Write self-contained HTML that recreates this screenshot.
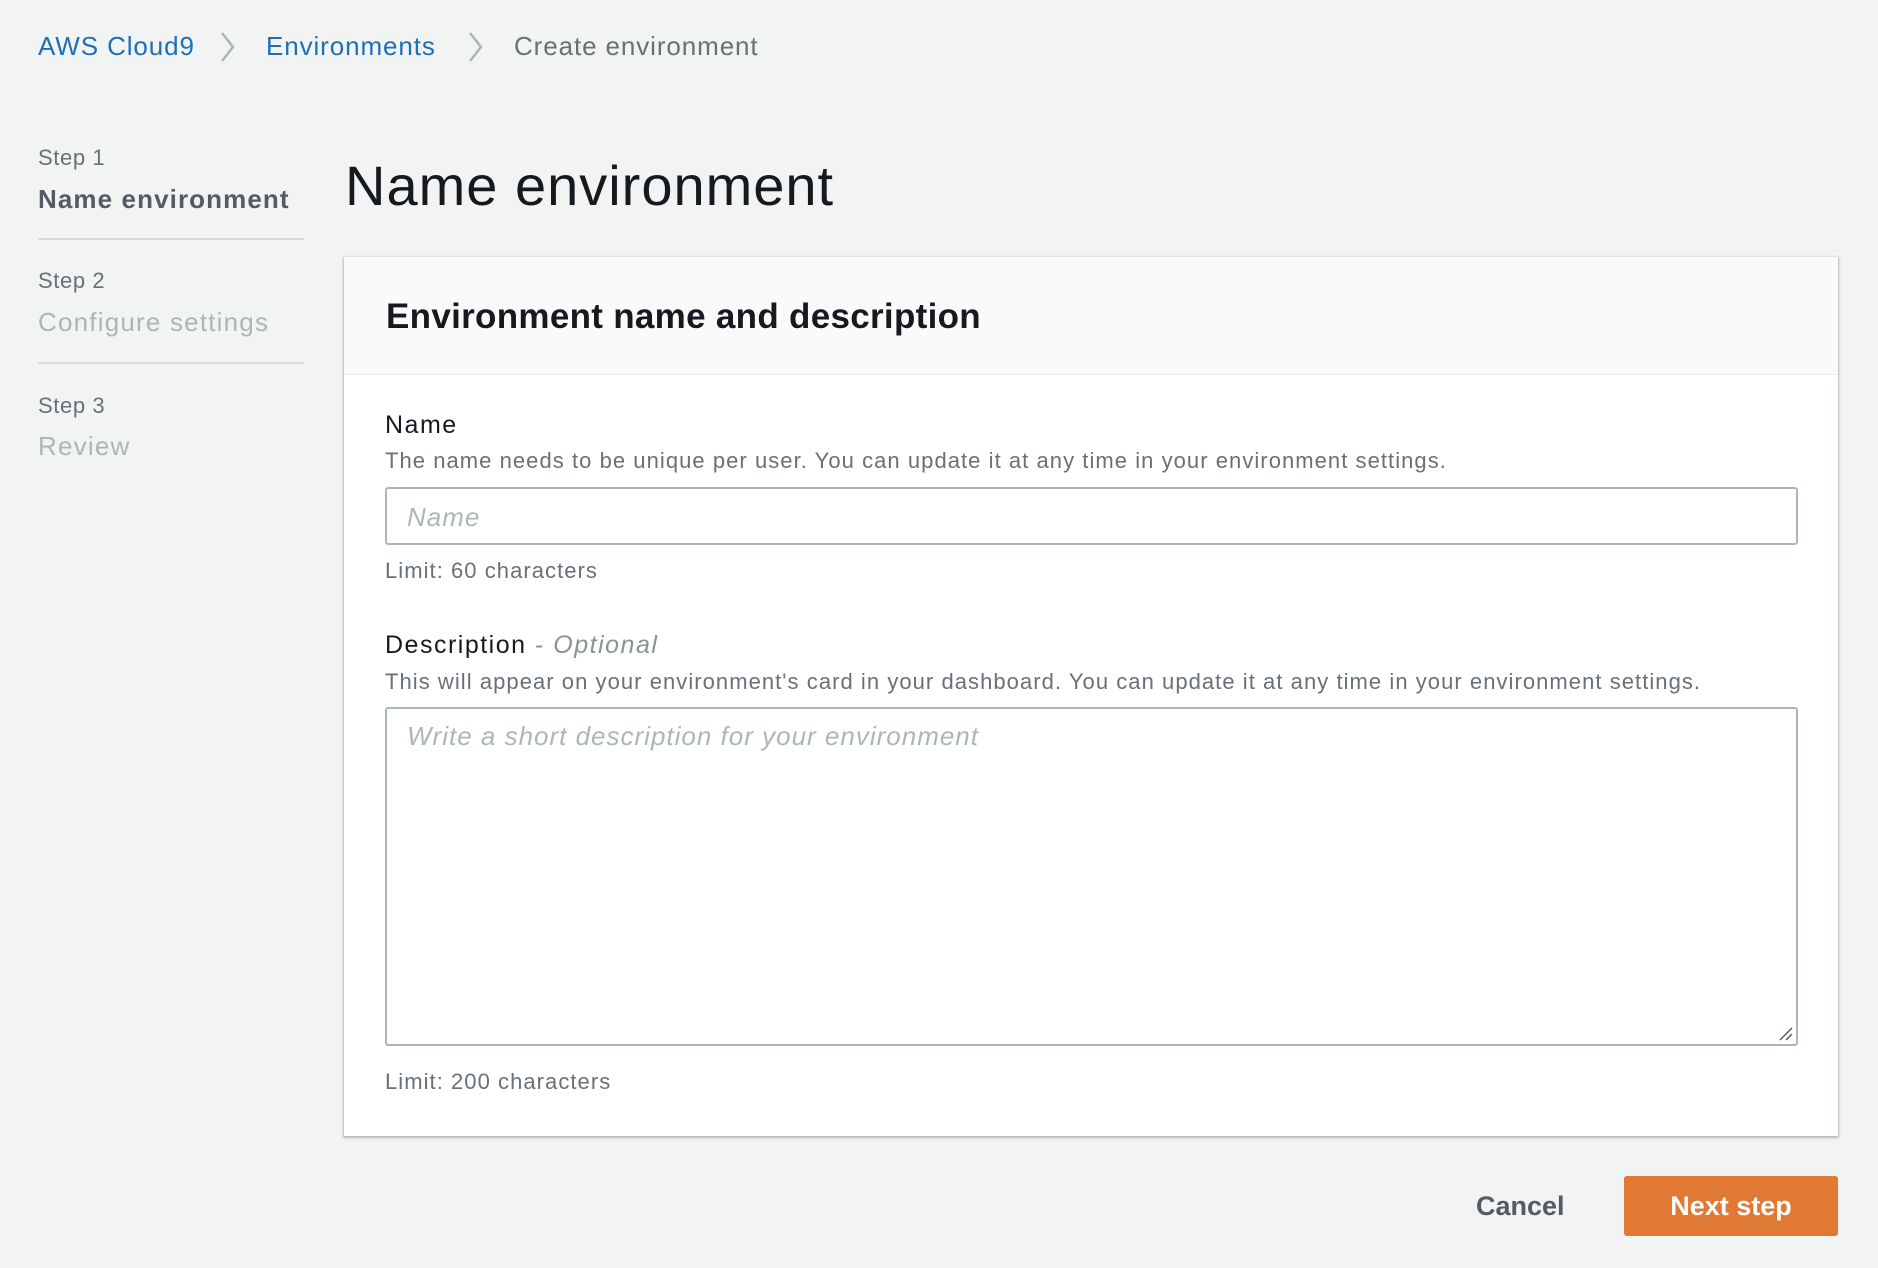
<!DOCTYPE html>
<html><head><meta charset="utf-8"><style>
*{margin:0;padding:0;box-sizing:border-box}
body{width:1878px;height:1268px;background:#f2f3f3;font-family:"Liberation Sans",sans-serif;position:relative;overflow:hidden;color:#16191f}
.a{position:absolute;white-space:nowrap;line-height:1}
.bc{font-size:26px;top:33px;letter-spacing:0.9px}
.link{color:#1f6fb5}
.chev{position:absolute;top:30px}
.step{font-size:22px;color:#687078;letter-spacing:0.6px}
.sn{font-size:26px;font-weight:bold;color:#545b64;letter-spacing:1.1px}
.sg{font-size:26px;color:#aab7b8;letter-spacing:1.2px}
.div{position:absolute;left:38px;width:266px;height:2px;background:#d5dbdb}
.help{font-size:22px;color:#687078;letter-spacing:1.05px}
.lab{font-size:25px;color:#16191f;letter-spacing:1.5px}
.ph{font-size:26px;font-style:italic;color:#aab7b8;letter-spacing:1px}
</style></head><body>
<div class="a bc link" style="left:38px">AWS Cloud9</div>
<svg class="chev" style="left:218px" width="20" height="34" viewBox="0 0 20 34"><path d="M4 3 L15 17 L4 31" fill="none" stroke="#aab7b8" stroke-width="2.5"/></svg>
<div class="a bc link" style="left:266px">Environments</div>
<svg class="chev" style="left:466px" width="20" height="34" viewBox="0 0 20 34"><path d="M4 3 L15 17 L4 31" fill="none" stroke="#aab7b8" stroke-width="2.5"/></svg>
<div class="a bc" style="left:514px;color:#687078">Create environment</div>

<div class="a step" style="left:38px;top:147px">Step 1</div>
<div class="a sn" style="left:38px;top:186px">Name environment</div>
<div class="div" style="top:238px"></div>
<div class="a step" style="left:38px;top:270px">Step 2</div>
<div class="a sg" style="left:38px;top:309px">Configure settings</div>
<div class="div" style="top:362px"></div>
<div class="a step" style="left:38px;top:395px">Step 3</div>
<div class="a sg" style="left:38px;top:433px">Review</div>

<div class="a" style="left:345px;top:158px;font-size:56px;letter-spacing:1px">Name environment</div>

<div style="position:absolute;left:344px;top:257px;width:1494px;height:879px;background:#fff;box-shadow:0 1px 2px 1px rgba(0,28,36,0.25)">
  <div style="height:118px;background:#fafafa;border-bottom:1px solid #eaeded"></div>
</div>
<div class="a" style="left:386px;top:299px;font-size:35px;font-weight:bold;letter-spacing:0.3px">Environment name and description</div>

<div class="a lab" style="left:385px;top:413px">Name</div>
<div class="a help" style="left:385px;top:450px">The name needs to be unique per user. You can update it at any time in your environment settings.</div>
<div style="position:absolute;left:385px;top:487px;width:1413px;height:58px;border:2px solid #aab7b8;border-radius:3px;background:#fff"></div>
<div class="a ph" style="left:407px;top:504px">Name</div>
<div class="a help" style="left:385px;top:560px">Limit: 60 characters</div>

<div class="a lab" style="left:385px;top:633px">Description <span style="color:#879596">- <i style="color:#879596">Optional</i></span></div>
<div class="a help" style="left:385px;top:671px">This will appear on your environment's card in your dashboard. You can update it at any time in your environment settings.</div>
<div style="position:absolute;left:385px;top:707px;width:1413px;height:339px;border:2px solid #aab7b8;border-radius:3px;background:#fff"></div>
<svg style="position:absolute;left:1778px;top:1026px" width="16" height="16"><path d="M2 14 L14 2 M8 14 L14 8" stroke="#545b64" stroke-width="1.5"/></svg>
<div class="a ph" style="left:407px;top:723px">Write a short description for your environment</div>
<div class="a help" style="left:385px;top:1071px">Limit: 200 characters</div>

<div class="a" style="left:1476px;top:1193px;font-size:27px;font-weight:bold;color:#545b64">Cancel</div>
<div style="position:absolute;left:1624px;top:1176px;width:214px;height:60px;background:#e07934;border-radius:3px;color:#fff;font-size:27px;font-weight:bold;text-align:center;line-height:60px">Next step</div>
</body></html>
